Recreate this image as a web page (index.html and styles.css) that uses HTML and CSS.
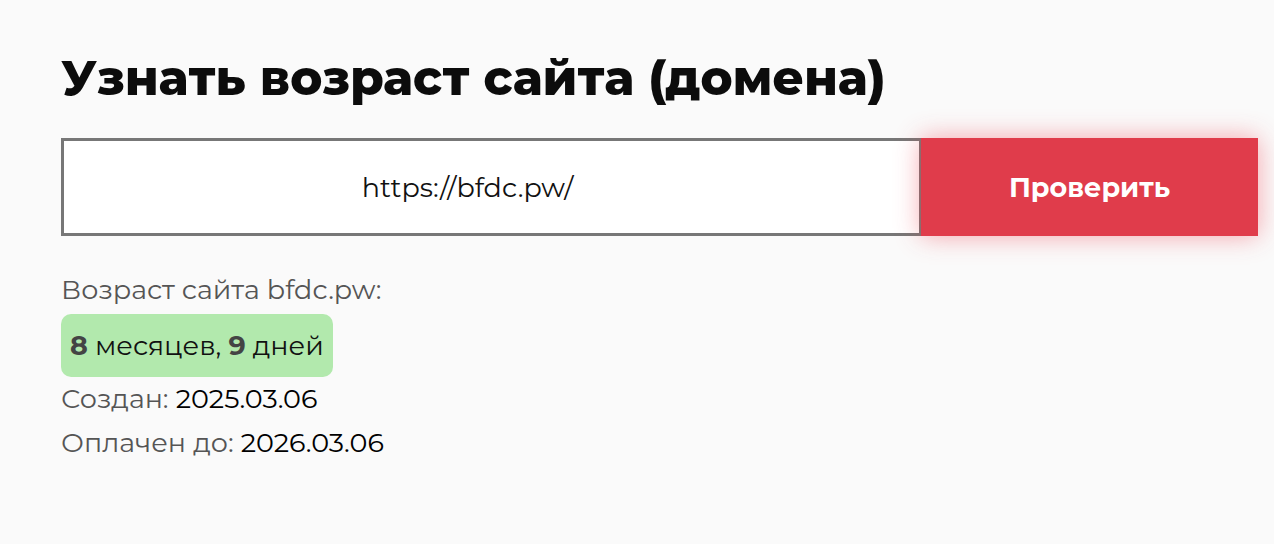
FILE: index.html
```html
<!DOCTYPE html>
<html lang="ru">
<head>
<meta charset="utf-8">
<title>Узнать возраст сайта</title>
<link rel="stylesheet" href="styles.css">
</head>
<body>
<main class="page">
  <h1 class="title">Узнать возраст сайта (домена)</h1>
  <form class="check">
    <div class="field">https://bfdc.pw/</div>
    <button class="btn" type="button">Проверить</button>
  </form>
  <div class="result">
    <div class="label">Возраст сайта bfdc.pw:</div>
    <div class="age"><b>8</b> месяцев, <b>9</b> дней</div>
    <div class="row">Создан: <span class="val">2025.03.06</span></div>
    <div class="row">Оплачен до: <span class="val">2026.03.06</span></div>
  </div>
</main>
</body>
</html>
```
FILE: styles.css
```css
html, body {
  margin: 0;
  background: #fafafa;
}
body {
  font-family: "Montserrat", "DejaVu Sans", "Noto Sans", sans-serif;
  color: #111;
}
.page {
  padding: 46px 0 0 61px;
}
.title {
  margin: 0;
  font-size: 48.5px;
  line-height: 64px;
  font-weight: 800;
  color: #0c0c0c;
}
.check {
  display: flex;
  margin-top: 28px;
  width: 1197px;
  height: 98px;
}
.field {
  box-sizing: border-box;
  width: 861px;
  height: 98px;
  border: 3px solid #777;
  background: #fff;
  display: flex;
  align-items: center;
  justify-content: center;
  padding-right: 48px;
  font-size: 27px;
  color: #111;
}
.btn {
  margin-left: -1px;
  width: 337px;
  height: 98px;
  border: 0;
  background: #e03c4b;
  color: #fff;
  font-family: inherit;
  font-size: 27px;
  font-weight: 700;
  box-shadow: 0 0 24px rgba(240, 60, 75, 0.45);
}
.result {
  margin-top: 36px;
  font-size: 27px;
  color: #555;
}
.label {
  line-height: 36px;
}
.age {
  display: inline-block;
  margin-top: 6px;
  padding: 0 9px;
  height: 63px;
  line-height: 63px;
  background: #b2e9ad;
  border-radius: 10px;
  font-size: 27px;
  color: #111;
}
.age b {
  color: #444;
}
.row {
  line-height: 44px;
}
.val {
  color: #000;
  font-size: 27px;
}
```
